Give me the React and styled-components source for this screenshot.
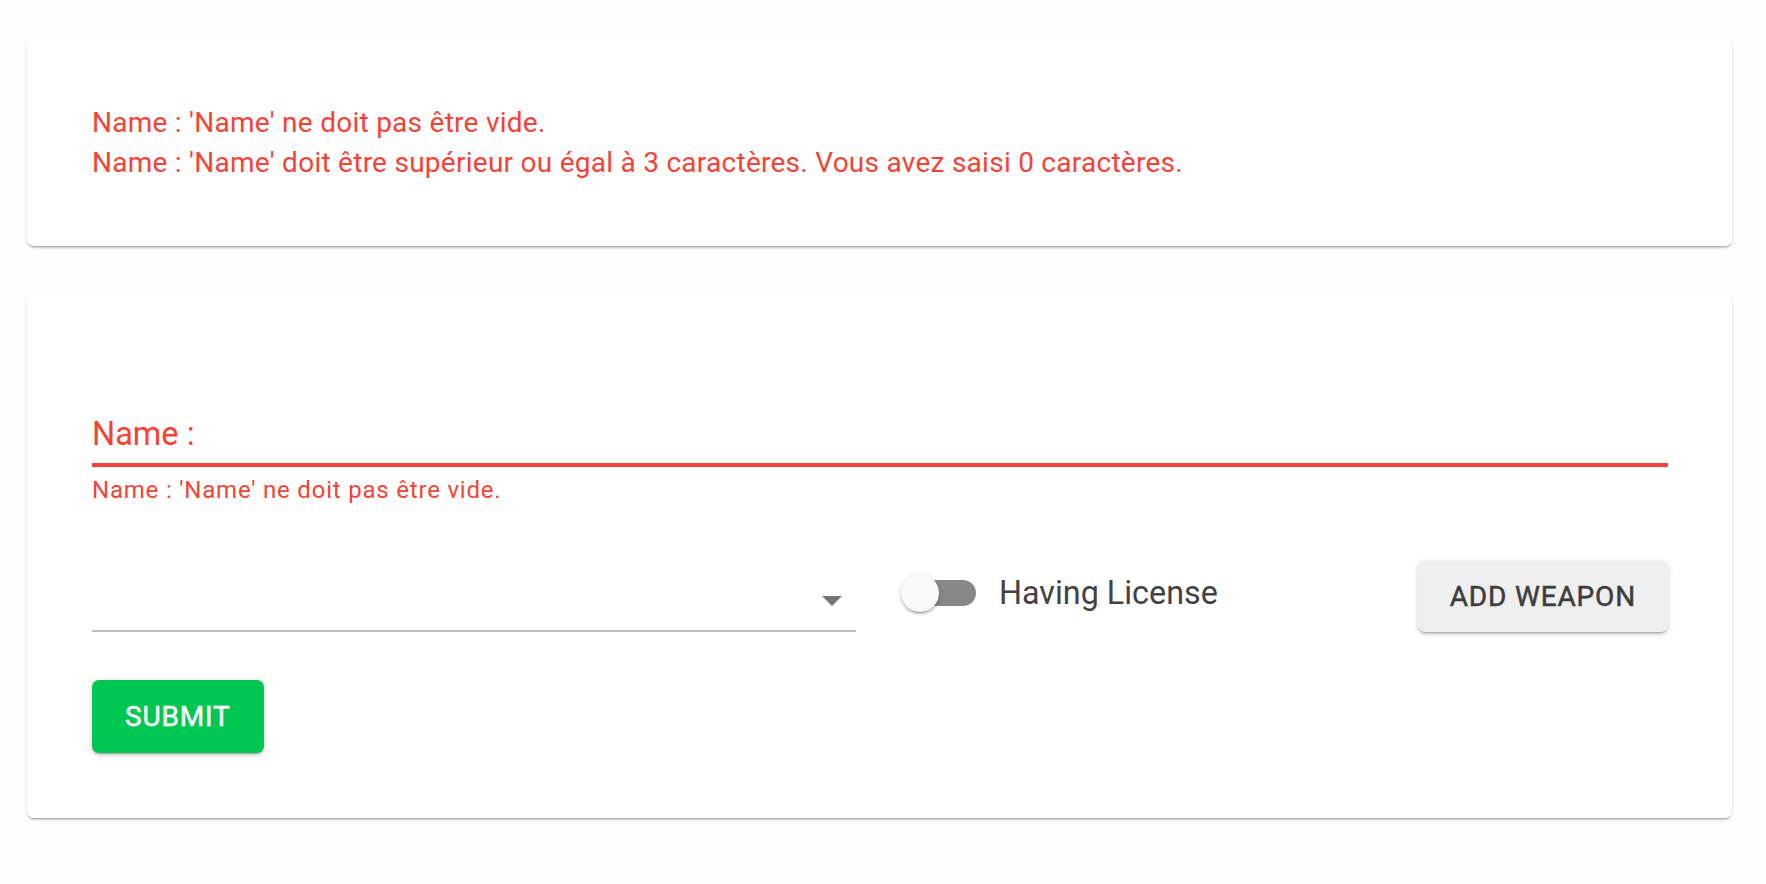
import React from "react";
import styled, { createGlobalStyle } from "styled-components";

const Global = createGlobalStyle`
  html, body { margin: 0; padding: 0; background: #fdfdfd; }
  body { font-family: Roboto, "Noto Sans", "Liberation Sans", sans-serif; }
  * { box-sizing: border-box; }
`;

const Page = styled.div`
  padding: 38px 34px 40px 27px;
  display: flex;
  flex-direction: column;
  gap: 48px;
`;

const Card = styled.section`
  background: #fff;
  border-radius: 7px;
  box-shadow: 0 3px 2px -2px rgba(0, 0, 0, 0.22), 0 2px 2px 0 rgba(0, 0, 0, 0.12),
    0 1px 5px 0 rgba(0, 0, 0, 0.07);
  padding: ${(p) => p.$pad};
`;

const ErrorLine = styled.div`
  color: #f44336;
  font-size: 28px;
  line-height: 40px;
  letter-spacing: 0.00938em;
`;

const Form = styled.form`
  display: flex;
  flex-direction: column;
`;

const InputBox = styled.div`
  padding: 59px 0 10px;
  border-bottom: 4px solid #f44336;
`;

const FieldLabel = styled.label`
  display: block;
  color: #f44336;
  font-size: 32.5px;
  line-height: 37px;
`;

const Helper = styled.div`
  margin-top: 8px;
  color: #f44336;
  font-size: 24px;
  line-height: 30px;
  letter-spacing: 0.0333em;
`;

const Row = styled.div`
  margin-top: 55px;
  display: flex;
  align-items: center;
  height: 72px;
`;

const Select = styled.div`
  width: 764px;
  height: 72px;
  align-self: flex-end;
  border-bottom: 2px solid #bdbdbd;
  display: flex;
  justify-content: flex-end;
  align-items: flex-end;
  padding: 0 14px 24px 0;
`;

const Arrow = styled.span`
  width: 0;
  height: 0;
  border-left: 10px solid transparent;
  border-right: 10px solid transparent;
  border-top: 10px solid #757575;
`;

const SwitchLabel = styled.label`
  margin-left: 45px;
  margin-bottom: 6px;
  display: flex;
  align-items: center;
  gap: 23px;
  color: #424242;
  font-size: 32.3px;
  line-height: 38px;
`;

const SwitchRoot = styled.span`
  position: relative;
  width: 75px;
  height: 38px;
  display: block;
`;

const Track = styled.span`
  position: absolute;
  left: 5px;
  top: 6px;
  width: 70px;
  height: 26px;
  border-radius: 13px;
  background: #888;
`;

const Thumb = styled.span`
  position: absolute;
  left: 0;
  top: 0;
  width: 38px;
  height: 38px;
  border-radius: 50%;
  background: #fafafa;
  box-shadow: 0 3px 2px -2px rgba(0, 0, 0, 0.25), 0 2px 3px 0 rgba(0, 0, 0, 0.16),
    0 1px 6px 0 rgba(0, 0, 0, 0.1);
`;

const Button = styled.button`
  border: 0;
  border-radius: 7px;
  height: ${(p) => p.$h}px;
  padding: 0 ${(p) => p.$px}px;
  font-family: inherit;
  font-size: 28px;
  font-weight: 400;
  -webkit-text-stroke: 0.5px currentColor;
  letter-spacing: 0.03em;
  text-transform: uppercase;
  background: ${(p) => p.$bg};
  color: ${(p) => p.$fg};
  box-shadow: 0 3px 2px -2px rgba(0, 0, 0, 0.22), 0 2px 3px 0 rgba(0, 0, 0, 0.14),
    0 1px 8px 0 rgba(0, 0, 0, 0.1);
  cursor: pointer;
`;

const Spacer = styled.div`
  flex: 1;
`;

const SubmitRow = styled.div`
  margin-top: 48px;
  display: flex;
`;

export default function App() {
  return (
    <>
      <Global />
      <Page>
        <Card $pad="65px 64px 63px 65px">
          <ErrorLine>Name : 'Name' ne doit pas être vide.</ErrorLine>
          <ErrorLine>
            Name : 'Name' doit être supérieur ou égal à 3 caractères. Vous avez saisi 0 caractères.
          </ErrorLine>
        </Card>
        <Card $pad="63px 64px 65px 65px">
          <Form onSubmit={(e) => e.preventDefault()}>
            <InputBox>
              <FieldLabel>Name :</FieldLabel>
            </InputBox>
            <Helper>Name : 'Name' ne doit pas être vide.</Helper>
            <Row>
              <Select>
                <Arrow />
              </Select>
              <SwitchLabel>
                <SwitchRoot>
                  <Track />
                  <Thumb />
                </SwitchRoot>
                Having License
              </SwitchLabel>
              <Spacer />
              <Button type="button" $h={71} $px={32} $bg="#efefef" $fg="#3d3d3d">
                Add Weapon
              </Button>
            </Row>
            <SubmitRow>
              <Button type="submit" $h={73} $px={33} $bg="#00c853" $fg="#fff">
                Submit
              </Button>
            </SubmitRow>
          </Form>
        </Card>
      </Page>
    </>
  );
}
